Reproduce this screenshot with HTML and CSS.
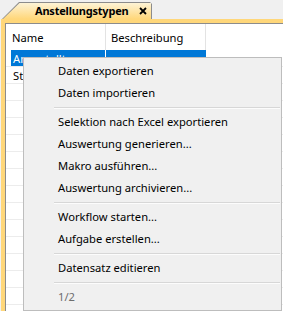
FILE: index.html
```html
<!DOCTYPE html>
<html lang="de">
<head>
    <meta charset="UTF-8">
    <title>Anstellungstypen</title>
    <link rel="stylesheet" href="styles.css">
</head>
<body>
    <div class="tabbar">
        <div class="tab">
            <div class="tab-face">
                <span class="tab-title">Anstellungstypen</span>
                <svg class="tab-close" width="8" height="8" viewBox="0 0 8 8">
                    <path d="M1 1 L7 7 M7 1 L1 7" stroke="#000" stroke-width="1.8" fill="none"/>
                </svg>
            </div>
        </div>
    </div>

    <div class="panel">
        <div class="grid">
            <div class="row head">
                <div class="ind"></div>
                <div class="cell c1 head-name">Name</div>
                <div class="cell c2 head-desc">Beschreibung</div>
            </div>
            <div class="row sel">
                <div class="ind"></div>
                <div class="cell c1">Angestellte</div>
                <div class="cell c2"></div>
            </div>
            <div class="row">
                <div class="ind"></div>
                <div class="cell c1">Stundenlöhner</div>
                <div class="cell c2"></div>
            </div>
            <div class="row"><div class="ind"></div><div class="cell c1"></div><div class="cell c2"></div></div>
            <div class="row"><div class="ind"></div><div class="cell c1"></div><div class="cell c2"></div></div>
            <div class="row"><div class="ind"></div><div class="cell c1"></div><div class="cell c2"></div></div>
            <div class="row"><div class="ind"></div><div class="cell c1"></div><div class="cell c2"></div></div>
            <div class="row"><div class="ind"></div><div class="cell c1"></div><div class="cell c2"></div></div>
            <div class="row"><div class="ind"></div><div class="cell c1"></div><div class="cell c2"></div></div>
            <div class="row"><div class="ind"></div><div class="cell c1"></div><div class="cell c2"></div></div>
            <div class="row"><div class="ind"></div><div class="cell c1"></div><div class="cell c2"></div></div>
            <div class="row"><div class="ind"></div><div class="cell c1"></div><div class="cell c2"></div></div>
            <div class="row"><div class="ind"></div><div class="cell c1"></div><div class="cell c2"></div></div>
            <div class="row"><div class="ind"></div><div class="cell c1"></div><div class="cell c2"></div></div>
            <div class="row"><div class="ind"></div><div class="cell c1"></div><div class="cell c2"></div></div>
            <div class="row"><div class="ind"></div><div class="cell c1"></div><div class="cell c2"></div></div>
        </div>
    </div>

    <!-- Kontextmenü -->
    <div class="menu">
        <div class="item">Daten exportieren</div>
        <div class="item">Daten importieren</div>
        <div class="sep"></div>
        <div class="item">Selektion nach Excel exportieren</div>
        <div class="item">Auswertung generieren...</div>
        <div class="item">Makro ausführen...</div>
        <div class="item">Auswertung archivieren...</div>
        <div class="sep"></div>
        <div class="item">Workflow starten...</div>
        <div class="item">Aufgabe erstellen...</div>
        <div class="sep"></div>
        <div class="item">Datensatz editieren</div>
        <div class="sep"></div>
        <div class="item disabled">1/2</div>
    </div>
</body>
</html>
```

FILE: styles.css
```css
body {
    margin: 0;
    padding: 0;
    background-color: #f0f0f0;
    font-family: 'Noto Sans', sans-serif;
    font-size: 11.2px;
    color: #000;
    height: 311px;
    overflow: hidden;
    position: relative;
}

.tabbar {
    height: 19px;
    padding-left: 2px;
    display: flex;
    align-items: flex-end;
}

.tab {
    width: 148px;
    height: 16px;
    padding: 1px 1px 0 1px;
    background-color: #8c8c8c;
    clip-path: polygon(17px 0, calc(100% - 2px) 0, 100% 2px, 100% 100%, 0 100%);
}

.tab-face {
    height: 16px;
    display: flex;
    align-items: center;
    background: linear-gradient(#fdf3d6, #ffd77a);
    clip-path: polygon(16.5px 0, 100% 0, 100% 100%, 0 100%);
}

.tab-title {
    font-weight: bold;
    font-size: 11px;
    letter-spacing: -0.2px;
    margin-left: 32px;
    margin-top: -1px;
}

.tab-close {
    margin-left: 11px;
}

.panel {
    margin-left: 1px;
    background-color: #ffd77a;
    padding: 4px 0 0 4px;
}

.grid {
    background-color: #fff;
    border-top: 1px solid #8c8c8c;
    border-left: 1px solid #8c8c8c;
    height: 300px;
}

.row {
    display: flex;
    height: 16px;
    border-bottom: 1px solid #ececec;
}

.row.head {
    height: 26px;
    border-bottom: none;
}

.ind {
    width: 5px;
}

.cell {
    display: flex;
    align-items: center;
    white-space: nowrap;
    overflow: hidden;
    padding-left: 2px;
}

.c1 {
    width: 92px;
    border-right: 1px solid #e3e3e3;
}

.c2 {
    width: 97px;
    border-right: 1px solid #e3e3e3;
}

.head-name {
    padding-left: 1px;
    width: 93px;
}

.head-desc {
    padding-left: 5px;
    width: 94px;
}

.row.sel .cell {
    background-color: #0078d7;
    color: #fff;
}

.row.sel .c1 {
    border-right-color: #fff;
}

.row.sel .c2 {
    border-right-color: #0078d7;
}

.menu {
    position: absolute;
    left: 23px;
    top: 57px;
    width: 257px;
    padding: 2px 0;
    background-color: #f0f0f0;
    border: 1px solid #bdbdbd;
}

.item {
    height: 22px;
    line-height: 22px;
    padding-left: 34px;
    white-space: nowrap;
}

.item.disabled {
    color: #6d6d6d;
}

.sep {
    height: 2px;
    margin: 3px 1px 2px 30px;
    border-top: 1px solid #d7d7d7;
    border-bottom: 1px solid #fcfcfc;
    box-sizing: border-box;
}
```
